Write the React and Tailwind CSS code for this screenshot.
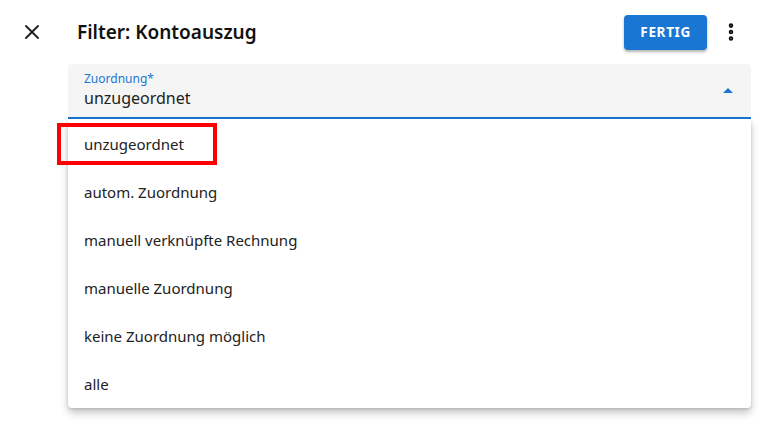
import { X, EllipsisVertical } from 'lucide-react';

const OPTIONS = [
  'unzugeordnet',
  'autom. Zuordnung',
  'manuell verknüpfte Rechnung',
  'manuelle Zuordnung',
  'keine Zuordnung möglich',
  'alle',
];

export default function App() {
  return (
    <div
      className="w-[763px] h-[428px] bg-white text-[#212121] overflow-hidden"
      style={{ fontFamily: '"Noto Sans", "Open Sans", sans-serif' }}
    >
      {/* header */}
      <div className="flex items-center h-[64px] pl-[20px] pr-[20px]">
        <div className="w-[24px] h-[24px] flex items-center justify-center">
          <X size={24} strokeWidth={2} className="text-[#222]" />
        </div>
        <h1 className="ml-[33px] text-[19px] font-semibold text-[#111] flex-1">Filter: Kontoauszug</h1>
        <button className="h-[35px] px-[16px] rounded-[4px] bg-[#1976d2] text-white text-[13.5px] font-bold tracking-[0.05em] shadow-[0_2px_3px_rgba(0,0,0,0.3)]">
          FERTIG
        </button>
        <div className="ml-[12px] w-[24px] flex justify-center">
          <EllipsisVertical size={22} strokeWidth={3} className="text-[#111]" />
        </div>
      </div>

      <div className="mx-[68px] mr-[12px]">
        {/* select field */}
        <div className="relative bg-[#f5f5f5] rounded-t-[4px] h-[55px] border-b-2 border-[#1976d2] px-[16px] pt-[7px]">
          <div className="text-[12px] leading-[16px] text-[#1976d2]">Zuordnung*</div>
          <div className="text-[16px] leading-[22px] text-[#222]">unzugeordnet</div>
          <div className="absolute right-[18px] top-[24px] w-0 h-0 border-l-[5px] border-r-[5px] border-b-[5px] border-l-transparent border-r-transparent border-b-[#1976d2]" />
        </div>

        {/* menu */}
        <div className="relative bg-white rounded-b-[4px] shadow-[0_5px_8px_rgba(0,0,0,0.22),0_1px_3px_rgba(0,0,0,0.15)] pt-[1px]">
          {OPTIONS.map((o) => (
            <div key={o} className="h-[48px] flex items-center px-[16px] text-[15px] text-[#222]">
              {o}
            </div>
          ))}
          <div className="absolute left-[-11px] top-[4px] w-[160px] h-[42px] border-[4px] border-[#ff0000]" />
        </div>
      </div>
    </div>
  );
}
